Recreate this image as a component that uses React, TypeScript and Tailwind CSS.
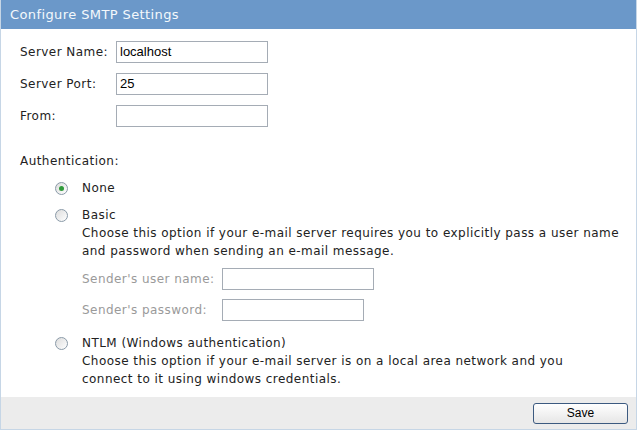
const labelFont = "font-['DejaVu_Sans',Verdana,sans-serif]";

function TextInput({ value, width }: { value?: string; width: string }) {
  return (
    <div
      className={`h-[22px] ${width} border border-[#a5acb5] bg-white px-[3px] flex items-center font-['Liberation_Sans',Arial,sans-serif] text-[13px] tracking-normal text-black`}
    >
      {value}
    </div>
  );
}

function Radio({ checked }: { checked?: boolean }) {
  return (
    <span className="flex h-[13px] w-[13px] shrink-0 items-center justify-center rounded-full border border-[#8a9aa8] bg-gradient-to-br from-[#dcdcdc] to-white">
      {checked && <span className="h-[5px] w-[5px] rounded-full bg-[#2f9a3a]" />}
    </span>
  );
}

function FieldRow({ label, value }: { label: string; value?: string }) {
  return (
    <div className="flex h-[22px] items-center">
      <span className="w-[96px]">{label}</span>
      <TextInput value={value} width="w-[152px]" />
    </div>
  );
}

export default function App() {
  return (
    <div className={`h-[430px] w-[640px] bg-white ${labelFont} text-[12px] tracking-[0.45px] text-[#222]`}>
      <div className="flex h-[430px] w-[637px] flex-col border-x border-b border-[#c6d6e6]">
        <div className="flex h-[29px] items-center bg-[#6b98c9] px-[9px] text-[13px] tracking-[0.4px] text-[#f4f8fc]">
          Configure SMTP Settings
        </div>

        <div className="flex flex-1 flex-col pl-[19px] pt-[12px]">
          <div className="flex flex-col gap-[10px]">
            <FieldRow label="Server Name:" value="localhost" />
            <FieldRow label="Server Port:" value="25" />
            <FieldRow label="From:" />
          </div>

          <div className="mt-[25px]">Authentication:</div>

          <div className="mt-[9px] flex flex-col pl-[35px]">
            <div className="flex h-[18px] items-center gap-[14px]">
              <Radio checked />
              <span>None</span>
            </div>

            <div className="mt-[9px] flex gap-[14px]">
              <div className="pt-[3px]">
                <Radio />
              </div>
              <div className="flex flex-col leading-[18px]">
                <span>Basic</span>
                <span>
                  Choose this option if your e-mail server requires you to explicitly pass a user name
                </span>
                <span>and password when sending an e-mail message.</span>
                <div className="mt-[8px] flex flex-col gap-[10px] text-[#9a9a9a]">
                  <div className="flex h-[21px] items-center">
                    <span className="w-[140px]">Sender's user name:</span>
                    <TextInput width="w-[152px] h-[21px]" />
                  </div>
                  <div className="flex h-[21px] items-center">
                    <span className="w-[140px]">Sender's password:</span>
                    <TextInput width="w-[142px] h-[21px]" />
                  </div>
                </div>
              </div>
            </div>

            <div className="mt-[14px] flex gap-[14px]">
              <div className="pt-[3px]">
                <Radio />
              </div>
              <div className="flex flex-col leading-[18px]">
                <span>NTLM (Windows authentication)</span>
                <span>
                  Choose this option if your e-mail server is on a local area network and you
                </span>
                <span>connect to it using windows credentials.</span>
              </div>
            </div>
          </div>
        </div>

        <div className="flex h-[32px] items-center justify-end bg-[#ececec] pr-[8px]">
          <button className="h-[21px] w-[95px] rounded-[3px] border border-[#3c5a80] bg-gradient-to-b from-white to-[#e6e6e6] font-['Liberation_Sans',Arial,sans-serif] text-[12px] tracking-normal text-black">
            Save
          </button>
        </div>
      </div>
    </div>
  );
}
